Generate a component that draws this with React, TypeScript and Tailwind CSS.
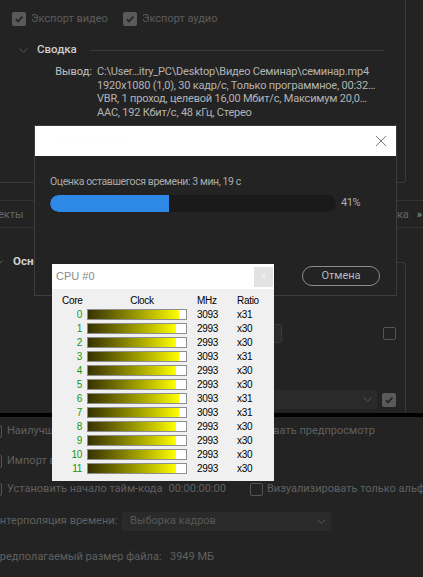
import React from 'react';

const cores = [3093, 2993, 2993, 3093, 2993, 2993, 3093, 3093, 2993, 2993, 2993, 2993];

function CheckOn({ className = '' }: { className?: string }) {
  return (
    <span className={`flex h-[14px] w-[14px] shrink-0 items-center justify-center rounded-[2px] bg-[#5a5a5a] ${className}`}>
      <svg width="10" height="10" viewBox="0 0 10 10">
        <path d="M1.8 5.2 L4 7.4 L8.4 2.6" fill="none" stroke="#262626" strokeWidth="1.8" />
      </svg>
    </span>
  );
}

function CheckOff({ className = '' }: { className?: string }) {
  return <span className={`block h-[13px] w-[13px] shrink-0 rounded-[2px] border-[1.5px] border-[#555] ${className}`} />;
}

function Chevron({ color = '#6a6a6a' }: { color?: string }) {
  return (
    <svg width="9" height="5" viewBox="0 0 9 5">
      <path d="M0.5 0.5 L4.5 4.5 L8.5 0.5" fill="none" stroke={color} strokeWidth="1" />
    </svg>
  );
}

function ProgressDialog() {
  return (
    <div className="absolute left-[34px] top-[125px] h-[171px] w-[363px] border border-[#3d3d3d] bg-[#232323]">
      <div className="flex h-[30px] items-center justify-between bg-white pl-[22px] pr-[9px]">
        <span className="text-[11px] text-[#fdfdfd]">Кодирование</span>
        <svg width="12" height="12" viewBox="0 0 12 12">
          <path d="M1 1 L11 11 M11 1 L1 11" stroke="#7a7a7a" strokeWidth="1" />
        </svg>
      </div>
      <div className="pl-[15px] pr-[16px] pt-[19px] text-[10.5px] tracking-[-0.4px]">
        <div className="h-[14px] leading-[14px] text-[#ababab]">Оценка оставшегося времени: 3 мин, 19 с</div>
        <div className="mt-[6px] flex items-center">
          <div className="h-[17px] w-[286px] shrink-0 overflow-hidden rounded-full bg-[#1a1a1a]">
            <div className="h-full w-[41.6%] rounded-l-full bg-[#2e89e6]" />
          </div>
          <span className="ml-[5px] text-[11px] text-[#ababab]">41%</span>
        </div>
        <div className="mt-[54px] flex justify-end">
          <div className="flex h-[20px] w-[78px] items-center justify-center rounded-full border border-[#8c8c8c] text-[11px] tracking-normal text-[#b9b9b9]">
            Отмена
          </div>
        </div>
      </div>
    </div>
  );
}

function CpuWindow() {
  return (
    <div className="absolute left-[52px] top-[264px] h-[217px] w-[222px] bg-[#f0f0f0] font-['Liberation_Sans',sans-serif] tracking-normal">
      <div className="flex h-[25px] items-center justify-between bg-white pl-[4px] pr-[1px]">
        <span className="text-[11px] text-[#8a8a8a]">CPU #0</span>
        <span className="flex h-[20px] w-[19px] items-center justify-center bg-[#e2e2e2] text-[9px] text-[#f8f8f8]">x</span>
      </div>
      <div className="pt-[4px] text-[10px] tracking-[-0.3px] text-black">
        <div className="flex h-[14px] items-center">
          <span className="ml-[10px] w-[25px]">Core</span>
          <span className="w-[110px] text-center">Clock</span>
          <span className="w-[40px]">MHz</span>
          <span>Ratio</span>
        </div>
        {cores.map((mhz, i) => (
          <div key={i} className="flex h-[14px] items-center">
            <span className="w-[30px] text-right text-[#129a12]">{i}</span>
            <div className="ml-[5px] h-[11px] w-[100px] border border-[#8e8e8e] bg-white">
              <div className="h-full bg-linear-to-r from-[#373300] to-[#ffff00]" style={{ width: `${(mhz / 3330) * 100}%` }} />
            </div>
            <span className="ml-[10px] w-[40px]">{mhz}</span>
            <span>{mhz > 3000 ? 'x31' : 'x30'}</span>
          </div>
        ))}
      </div>
    </div>
  );
}

export default function App() {
  return (
    <div className="relative h-[577px] w-[423px] overflow-hidden whitespace-nowrap bg-[#232323] font-['Roboto',sans-serif] text-[11px]">
      {/* summary panel */}
      <div className="h-[183px] w-[406px] rounded-br-[4px] border-r border-b border-[#393939] pt-[12px]">
        <div className="flex h-[14px] items-center pl-[12px] text-[#5c5c5c]">
          <div className="flex w-[111px] shrink-0 items-center">
            <CheckOn />
            <span className="ml-[5px]">Экспорт видео</span>
          </div>
          <CheckOn />
          <span className="ml-[5px]">Экспорт аудио</span>
        </div>
        <div className="mt-[17px] flex h-[14px] items-center">
          <span className="ml-[19px]">
            <Chevron color="#555" />
          </span>
          <span className="ml-[9px] text-[11.5px] font-medium text-[#cdcdcd]">Сводка</span>
          <span className="ml-[13px] h-px w-[294px] bg-[#3a3a3a]" />
        </div>
        <div className="mt-[8px] flex leading-[13.5px]">
          <div className="w-[92px] shrink-0 text-right text-[#c2c2c2]">Вывод:</div>
          <div className="ml-[5px] tracking-[-0.2px] text-[#b4b4b4]">
            <div>C:\User…itry_PC\Desktop\Видео Семинар\семинар.mp4</div>
            <div>1920x1080 (1,0), 30 кадр/с, Только программное, 00:32…</div>
            <div>VBR, 1 проход, целевой 16,00 Мбит/с, Максимум 20,0…</div>
            <div>AAC, 192 Кбит/с, 48 кГц, Стерео</div>
          </div>
        </div>
      </div>

      {/* tabs */}
      <div className="mt-[17px] flex h-[28px] items-center justify-between border-y border-[#333] text-[#676767]">
        <span className="-ml-[2px] mt-[2px]">екты</span>
        <span className="mt-[2px] flex items-center">
          ка
          <span className="ml-[8px] mr-[1px] text-[#9a9a9a]">»</span>
        </span>
      </div>

      {/* video settings */}
      <div className="flex h-[185px]">
        <div className="w-[230px] shrink-0 pt-[27px]">
          <div className="flex h-[14px] items-center">
            <span className="-ml-[6px]">
              <Chevron color="#666" />
            </span>
            <span className="ml-[10px] text-[11.5px] font-bold text-[#cfcfcf]">Основные параметры видео</span>
          </div>
        </div>
        <div className="mt-[34px] w-[176px] shrink-0 rounded-tr-[4px] border-t border-r border-[#393939]">
          <div className="mt-[61px] flex items-center">
            <div className="ml-[25px] h-[19px] w-[27px] rounded-[3px] border border-[#3a3a3a] bg-[#2a2a2a]" />
            <CheckOff className="ml-[101px]" />
          </div>
          <div className="mt-[47px] flex items-center">
            <div className="ml-[10px] flex h-[19px] w-[137px] items-center justify-end rounded-[2px] bg-[#2a2a2a] pr-[5px]">
              <Chevron color="#555" />
            </div>
            <CheckOn className="ml-[5px]" />
          </div>
        </div>
      </div>

      <div className="h-[4px] bg-black" />

      {/* render options */}
      <div className="-ml-[11px] pt-[7px] text-[#606060]">
        <div className="flex h-[14px] items-center">
          <div className="flex w-[217px] shrink-0 items-center">
            <CheckOff />
            <span className="ml-[5px]">Наилучшее качество визуализации</span>
          </div>
          <CheckOff />
          <span className="ml-[4px]">Использовать предпросмотр</span>
        </div>
        <div className="mt-[16px] flex h-[14px] items-center">
          <CheckOff />
          <span className="ml-[5px]">Импорт в проект</span>
        </div>
        <div className="mt-[14px] flex h-[14px] items-center">
          <div className="flex w-[261px] shrink-0 items-center">
            <CheckOff />
            <span className="ml-[5px]">Установить начало тайм-кода</span>
            <span className="ml-[6px]">00:00:00:00</span>
          </div>
          <CheckOff />
          <span className="ml-[4px]">Визуализировать только альфа-канал</span>
        </div>
        <div className="mt-[16px] flex h-[19px] items-center">
          <span className="ml-[3px] w-[130px] shrink-0">Интерполяция времени:</span>
          <div className="flex h-[19px] w-[209px] shrink-0 items-center justify-between rounded-[2px] bg-[#2a2a2a] pl-[8px] pr-[5px] text-[#575757]">
            <span>Выборка кадров</span>
            <Chevron color="#555" />
          </div>
        </div>
        <div className="mt-[19px] flex h-[14px] items-center">
          <span className="ml-[3px] w-[178px] shrink-0">Предполагаемый размер файла:</span>
          <span>3949 МБ</span>
        </div>
      </div>

      <ProgressDialog />
      <CpuWindow />
    </div>
  );
}
